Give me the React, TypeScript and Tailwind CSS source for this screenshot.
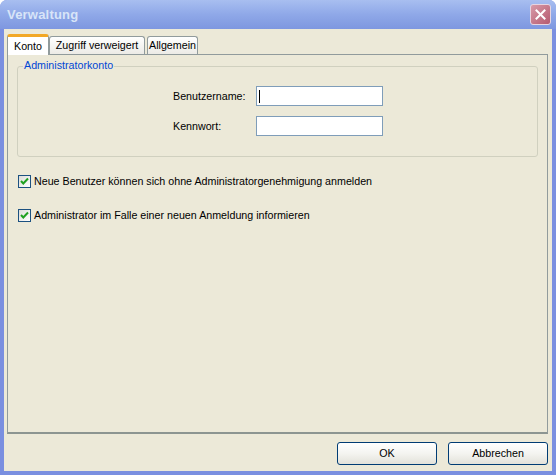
// Verwaltung – XP-style dialog (inactive window)
import React from 'react';

const font = "font-['Liberation_Sans',Arial,sans-serif]";

function CheckBox({ label }: { label: string }) {
  return (
    <div className="flex items-center h-[14px]">
      <div className="w-[13px] h-[13px] border border-[#1C5180] bg-gradient-to-br from-[#DCDCD7] to-white flex items-center justify-center">
        <svg width="9" height="9" viewBox="0 0 9 9">
          <path d="M1 4 L3.3 6.5 L8 1.5" fill="none" stroke="#21A121" strokeWidth="2" />
        </svg>
      </div>
      <span className="ml-[3px] text-[10.7px] text-black leading-none">{label}</span>
    </div>
  );
}

function TextBox({ caret }: { caret?: boolean }) {
  return (
    <div className="w-[127px] h-[20px] border border-[#7F9DB9] bg-white flex items-center pl-[2px]">
      {caret && <div className="w-px h-[13px] bg-black" />}
    </div>
  );
}

function XpButton({ label }: { label: string }) {
  return (
    <button className="w-[100px] h-[23px] rounded-[3px] border border-[#003C74] bg-gradient-to-b from-white via-[#F4F4F0] to-[#E3E2DA] text-[10.7px] text-black leading-none">
      {label}
    </button>
  );
}

export default function App() {
  return (
    <div className={`${font} w-[556px] h-[475px] flex flex-col rounded-t-[7px] overflow-hidden bg-[#7A8FE0]`}>
      {/* Titelleiste */}
      <div className="h-[29px] shrink-0 flex items-center justify-between pl-[7px] pr-[5px] bg-gradient-to-b from-[#A8BEF0] via-[#8FA8E8] to-[#7E97E0]">
        <span className="text-[13px] font-bold text-[#D8E4F8] tracking-[0.2px]">Verwaltung</span>
        <div className="w-[21px] h-[21px] rounded-[3px] border border-[#E6D4E0] bg-gradient-to-br from-[#D79AA8] to-[#B55A70] flex items-center justify-center">
          <svg width="11" height="11" viewBox="0 0 11 11">
            <path d="M1.5 1.5 L9.5 9.5 M9.5 1.5 L1.5 9.5" stroke="white" strokeWidth="2" strokeLinecap="square" />
          </svg>
        </div>
      </div>

      {/* Client-Bereich */}
      <div className="flex-1 flex px-[4px] pb-[4px]">
        <div className="flex-1 flex flex-col bg-[#ECE9D8] pt-[5px] pl-[3px] pr-[4px] pb-[6px]">
          {/* Reiter */}
          <div className="flex items-end h-[20px] relative z-10 text-[10.7px]">
            <div className="w-[42px] h-[21px] -mb-px bg-white border border-[#919B9C] border-b-0 rounded-t-[3px] border-t-[3px] border-t-[#F2A826] flex items-center justify-center">
              Konto
            </div>
            <div className="w-[96px] h-[18px] bg-gradient-to-b from-white to-[#ECEBE6] border border-[#919B9C] border-b-0 rounded-t-[3px] flex items-center justify-center">
              Zugriff verweigert
            </div>
            <div className="w-[51px] h-[18px] ml-[2px] bg-gradient-to-b from-white to-[#ECEBE6] border border-[#919B9C] border-b-0 rounded-t-[3px] flex items-center justify-center">
              Allgemein
            </div>
          </div>

          {/* Reiter-Inhalt */}
          <div className="flex-1 border border-[#919B9C] border-b-2 border-b-[#8C9591] bg-[#ECE9D8] pt-[11px] px-[9px]">
            <div className="relative h-[91px] border border-[#D0D0BF] rounded-[3px]">
              <span className="absolute left-[5px] -top-[7px] px-[1px] bg-[#ECE9D8] text-[10.7px] text-[#0046D5] leading-none">
                Administratorkonto
              </span>
              <div className="pt-[19px] pl-[155px] flex flex-col gap-[10px] text-[10.7px]">
                <div className="flex items-center">
                  <span className="w-[83px]">Benutzername:</span>
                  <TextBox caret />
                </div>
                <div className="flex items-center">
                  <span className="w-[83px]">Kennwort:</span>
                  <TextBox />
                </div>
              </div>
            </div>

            <div className="mt-[17px] pl-px">
              <CheckBox label="Neue Benutzer können sich ohne Administratorgenehmigung anmelden" />
            </div>
            <div className="mt-[20px] pl-px">
              <CheckBox label="Administrator im Falle einer neuen Anmeldung informieren" />
            </div>
          </div>

          {/* Schaltflächen */}
          <div className="flex justify-end gap-[11px] mt-[8px]">
            <XpButton label="OK" />
            <XpButton label="Abbrechen" />
          </div>
        </div>
      </div>
    </div>
  );
}
